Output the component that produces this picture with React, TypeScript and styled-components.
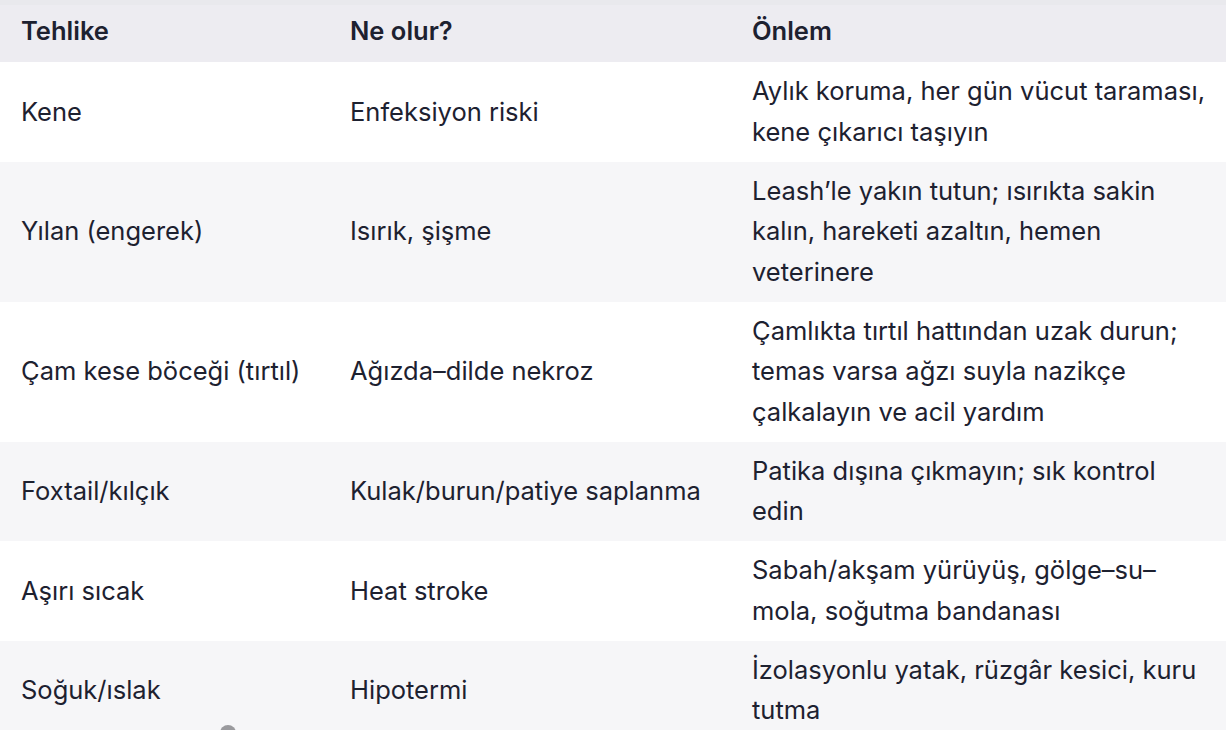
import styled, { createGlobalStyle } from "styled-components";
import React from "react";

const GlobalStyle = createGlobalStyle`
  html, body {
    margin: 0;
    padding: 0;
    background: #ffffff;
    overflow: hidden;
  }
  body {
    font-family: "Inter", "Liberation Sans", sans-serif;
    color: #1d2130;
  }
`

const Page = styled.div`
  position: relative;
  width: 1226px;
  height: 730px;
  overflow: hidden;
`

const Table = styled.table`
  width: 100%;
  border-collapse: collapse;
  table-layout: fixed;
  font-size: 25.5px;
  line-height: 40.5px;
`

const HeadRow = styled.tr`
  background: #edecf1;
  box-shadow: inset 0 5px 0 #e9e9ed;
  th {
    text-align: left;
    font-weight: 600;
    padding: 10.75px 21px;
    height: 40.5px;
  }
`

const Row = styled.tr<{ $shaded: boolean }>`
  background: ${(p) => (p.$shaded ? "#f6f6f8" : "#ffffff")};
  td {
    padding: 9.25px 21px;
    vertical-align: middle;
    font-weight: 400;
  }
  td:last-child {
    padding-right: 16px;
  }
`

const ScrollDot = styled.div`
  position: absolute;
  left: 220px;
  top: 725px;
  width: 16px;
  height: 16px;
  border-radius: 50%;
  background: #9a9a9e;
`

const rows: [string, string, string][] = [
  ["Kene", "Enfeksiyon riski", "Aylık koruma, her gün vücut taraması, kene çıkarıcı taşıyın"],
  ["Yılan (engerek)", "Isırık, şişme", "Leash’le yakın tutun; ısırıkta sakin kalın, hareketi azaltın, hemen veterinere"],
  ["Çam kese böceği (tırtıl)", "Ağızda–dilde nekroz", "Çamlıkta tırtıl hattından uzak durun; temas varsa ağzı suyla nazikçe çalkalayın ve acil yardım"],
  ["Foxtail/kılçık", "Kulak/burun/patiye saplanma", "Patika dışına çıkmayın; sık kontrol edin"],
  ["Aşırı sıcak", "Heat stroke", "Sabah/akşam yürüyüş, gölge–su–mola, soğutma bandanası"],
  ["Soğuk/ıslak", "Hipotermi", "İzolasyonlu yatak, rüzgâr kesici, kuru tutma"],
];

const App = () => {
  return (
    <Page>
      <GlobalStyle />
      <Table>
        <colgroup>
          <col style={{ width: 329 }} />
          <col style={{ width: 402 }} />
          <col />
        </colgroup>
        <thead>
          <HeadRow>
            <th>Tehlike</th>
            <th>Ne olur?</th>
            <th>Önlem</th>
          </HeadRow>
        </thead>
        <tbody>
          {rows.map((r, i) => (
            <Row key={i} $shaded={i % 2 === 1}>
              <td>{r[0]}</td>
              <td>{r[1]}</td>
              <td>{r[2]}</td>
            </Row>
          ))}
        </tbody>
      </Table>
      <ScrollDot />
    </Page>
  );
}

export default App;
